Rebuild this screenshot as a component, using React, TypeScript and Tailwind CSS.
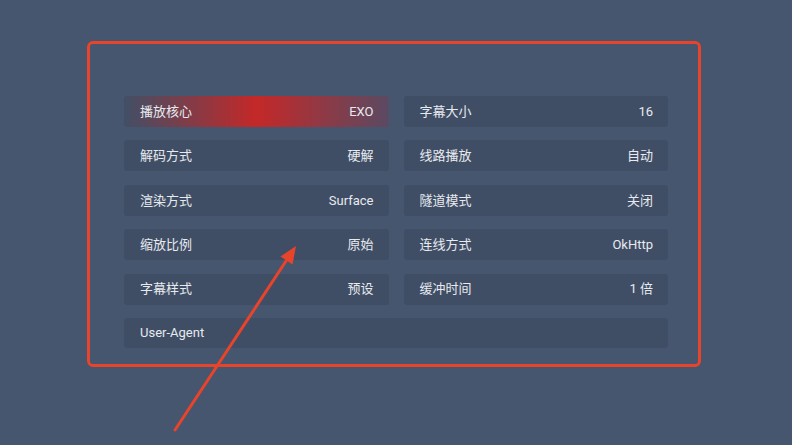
const rows: [string, string][] = [
  ["播放核心", "EXO"],
  ["字幕大小", "16"],
  ["解码方式", "硬解"],
  ["线路播放", "自动"],
  ["渲染方式", "Surface"],
  ["隧道模式", "关闭"],
  ["缩放比例", "原始"],
  ["连线方式", "OkHttp"],
  ["字幕样式", "预设"],
  ["缓冲时间", "1 倍"],
];

function SettingRow({
  label,
  value,
  focused,
}: {
  label: string;
  value: string;
  focused?: boolean;
}) {
  return (
    <div
      className={
        focused
          ? "h-[31px] rounded-[3px] flex items-center justify-between pl-4 pr-[15px] bg-[linear-gradient(90deg,#414f66_0%,#c42828_50%,#5a4a62_100%)]"
          : "h-[31px] rounded-[3px] flex items-center justify-between pl-4 pr-[15px] bg-[#404e65]"
      }
    >
      <span>{label}</span>
      <span>{value}</span>
    </div>
  );
}

export default function App() {
  return (
    <div
      className="relative min-h-[445px] w-full bg-[#46566e] text-[13px] text-[#e7eaef] overflow-hidden"
      style={{ fontFamily: "Roboto, 'Noto Sans CJK SC', sans-serif" }}
    >
      <div className="pl-[124px] pt-[96px]">
        <div className="grid w-[544px] grid-cols-2 gap-x-[15px] gap-y-[13.4px]">
          {rows.map(([label, value], i) => (
            <SettingRow key={label} label={label} value={value} focused={i === 0} />
          ))}
          <div className="col-span-2 h-[30.5px] rounded-[3px] flex items-center pl-4 bg-[#404e65]">
            User-Agent
          </div>
        </div>
      </div>

      {/* annotation overlay */}
      <div className="absolute left-[87px] top-[41px] w-[614px] h-[326px] border-[3px] border-[#e8432b] rounded-[6px] pointer-events-none" />
      <svg
        className="absolute inset-0 pointer-events-none"
        width="792"
        height="445"
        viewBox="0 0 792 445"
      >
        <line
          x1="175"
          y1="430"
          x2="288"
          y2="258"
          stroke="#e8432b"
          strokeWidth="3"
          strokeLinecap="round"
        />
        <polygon points="296,246 292.5,264.5 280.5,256.5" fill="#e8432b" />
      </svg>
    </div>
  );
}
